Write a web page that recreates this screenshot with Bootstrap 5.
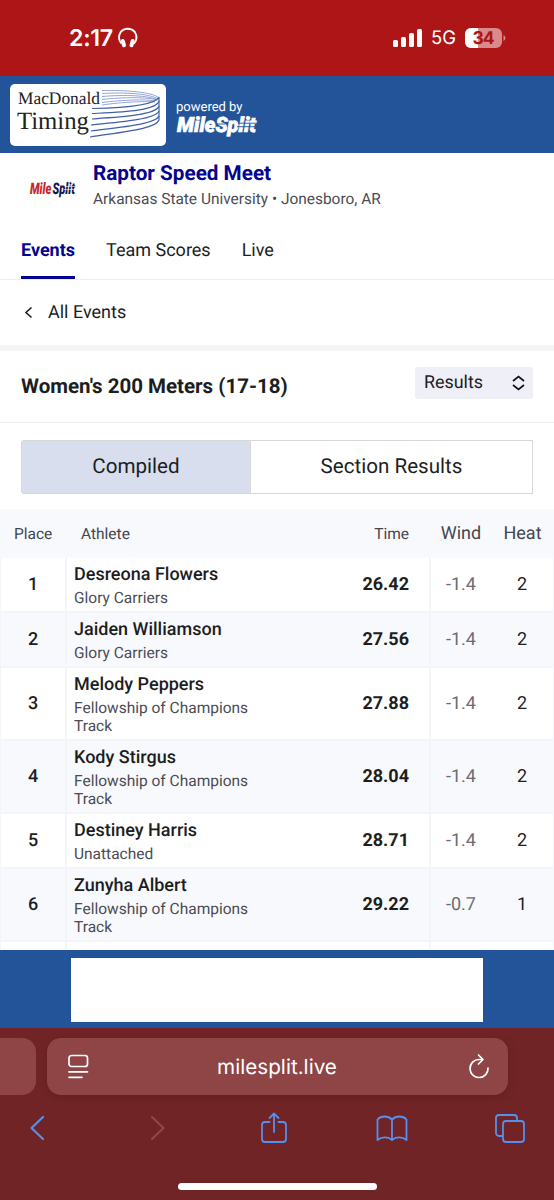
<!DOCTYPE html>
<html lang="en">
<head>
<meta charset="utf-8">
<meta name="viewport" content="width=device-width, initial-scale=1">
<title>Raptor Speed Meet</title>
<link rel="stylesheet" href="https://cdn.jsdelivr.net/npm/bootstrap@5.3.0/dist/css/bootstrap.min.css">
<style>
  body { font-family: Roboto, "Liberation Sans", sans-serif; color: #1c1e22; height: 1200px; line-height: 1.2; text-rendering: geometricPrecision; }
  svg { display: block; flex: none; overflow: visible; }
  .ios { font-family: Inter, "Liberation Sans", sans-serif; }
  .status-bar { height: 76px; background: #ad1517; color: #fff; padding: 0 48px 0 69px; }
  .clock { font-size: 23.2px; font-weight: 600; letter-spacing: -.3px; padding-top: 1px; }
  .brand-bar { height: 77px; background: #23549a; color: #fff; padding: 0 10px; }
  .powered { font-size: 13px; letter-spacing: 0; padding-top: 1px; margin-bottom: -1px; }
  .meet { height: 67px; padding: 0 21px 0 29px; }
  .meet h1 { font-size: 20.7px; line-height: 26px; color: #04048f; }
  .meet p { font-size: 15.45px; line-height: 18px; color: #4b4c54; }
  .tabs { height: 60px; padding: 0 21px; gap: 31px; border-bottom: 1px solid #ececee; font-size: 18px; }
  .tabs a { color: #1c1e22; padding-top: 20px; text-decoration: none; }
  .tabs a.active { color: #04048f; border-bottom: 3px solid #04048f; font-weight: 700; }
  .back { height: 65px; padding: 0 24px; gap: 14px; font-size: 18px; }
  .back svg { margin-bottom: 2px; }
  .event { height: 78px; padding: 0 21px; border-top: 6px solid #f4f4f4; border-bottom: 1px solid #ececee; }
  .event h2 { font-size: 20.5px; padding-top: 1px; }
  .picker { width: 118px; height: 32px; margin-top: -8px; padding: 0 8px 0 9px; border-radius: 3px; background: #eff0f7; font-size: 17.9px; }
  .segments { height: 54px; margin: 17px 21px 15px; font-size: 20.6px; }
  .segments div { border: 1px solid #d6d7da; }
  .segments .on { width: 230px; background: #d9deee; border-radius: 3px 0 0 3px; }
  .results { height: 441px; overflow: hidden; }
  .results table { table-layout: fixed; border-collapse: separate; border-spacing: 0; width: 554px; }
  .results th { height: 49px; background: #f8f9fd; font-weight: 400; font-size: 15.5px; color: #44464e; padding: 2px 14px 0; }
  .results th.wide { font-size: 18px; padding: 0; }
  .results td { height: 55px; border-bottom: 2px solid #f4f5f8; padding: 0; vertical-align: middle; font-size: 18px; }
  .results tr.two td { height: 73px; }
  .results tr.alt td { background: #f8f9fd; }
  .results td:first-child { border-left: 1px solid #f4f5f8; border-right: 2px solid #f4f5f8; font-weight: 500; }
  .results td:last-child { border-right: 1px solid #f4f5f8; }
  .results td:nth-child(2) { padding: 0 0 0 7px; }
  .results td:nth-child(3) { padding-right: 20px; font-weight: 700; border-right: 2px solid #f4f5f8; }
  .results td:nth-child(4) { color: #6a6c70; }
  .who { font-weight: 500; line-height: 24px; padding-top: 1px; }
  .team { font-size: 15.5px; line-height: 18px; color: #4b4c54; padding-top: 2px; width: 200px; }
  .ad { height: 78px; background: #23549a; padding-top: 8px; }
  .ad div { width: 412px; height: 64px; background: #fff; }
  .browser { height: 172px; background: #702426; padding-top: 10px; }
  .address { height: 57px; gap: 11px; }
  .address .prev { width: 36px; background: #8f4446; border-radius: 0 14px 14px 0; }
  .address .url { width: 461px; background: #8f4446; border-radius: 14px; padding: 0 18px 0 21px; color: #fff; font-size: 20.7px; box-shadow: 0 2px 10px rgba(60,0,0,.18); }
  .url span { margin: 2px 3px 0 0; }
  .tools { height: 66px; padding: 0 28px 0 21px; }
  .home-line { width: 199px; height: 7px; border-radius: 4px; background: #fff; margin-top: 22px; }
</style>
</head>
<body class="bg-white overflow-hidden">
<header class="status-bar ios d-flex align-items-center justify-content-between">
  <div class="d-flex align-items-center">
    <span class="clock">2:17</span>
    <svg style="margin-left:5px" width="20" height="22" viewBox="0 0 20 22" fill="none" stroke="#fff"><path d="M3.500 16.500C.5 13.500 .2 8.500 2.600 5.200A9 8.600 0 0 1 16.900 5.200C19.300 8.500 19 13.500 16 16.500" stroke-width="1.900"/><path d="M4.800 14l1.200 4.300M14.700 14l-1.200 4.300" stroke-width="4" stroke-linecap="round"/></svg>
  </div>
  <div class="d-flex align-items-center">
    <svg width="29" height="18" viewBox="0 0 29 18" fill="#fff"><rect y="11" width="5" height="7" rx="1.500"/><rect x="8" y="8" width="5" height="10" rx="1.500"/><rect x="16" y="4" width="5" height="14" rx="1.500"/><rect x="24" width="5" height="18" rx="1.500"/></svg>
    <span style="font-size:18.500px;margin:1px 9px 0">5G</span>
    <svg width="41" height="20" viewBox="0 0 41 20"><clipPath id="bat"><rect width="37" height="20" rx="6"/></clipPath><g clip-path="url(#bat)"><rect width="37" height="20" fill="#da8a8b"/><rect width="13" height="20" fill="#fff"/></g><path d="M38.500 7q2 1 2 3t-2 3z" fill="#da8a8b"/><text x="18.500" y="16.200" text-anchor="middle" font-size="17.500" font-weight="700" fill="#ad1517" textLength="22">34</text></svg>
  </div>
</header>

<div class="brand-bar d-flex align-items-center">
  <svg width="156" height="62" viewBox="0 0 156 62">
    <rect width="156" height="62" rx="5" fill="#fff"/>
    <g fill="#222" font-family="'Liberation Serif', serif"><text x="8" y="19.500" font-size="17.500" textLength="82" lengthAdjust="spacingAndGlyphs">MacDonald</text><text x="7" y="45" font-size="25" textLength="72" lengthAdjust="spacingAndGlyphs">Timing</text></g>
    <g fill="none" stroke="#7890c8" stroke-width=".8"><path d="M92 6.500C115 6 143 8 149 14"/><path d="M92 9.500C115 8 141 10 148 15"/><path d="M92 12.500C115 10.500 139 11.500 148 16"/><path d="M92 15.500C114 13 137 13 147 16"/><path d="M92 18.500C112 16 136 15 145 17"/><path d="M92 21C112 18 136 17 145 18"/></g>
    <g fill="none" stroke="#3f60a8" stroke-width="1.200"><path d="M82 24.500C112 24 145 22 149 13V17C146 27 112 28 82 29.500"/><path d="M149 17V22C146 31 112 33 82 35"/><path d="M149 22V27C146 35 112 38 81 41"/><path d="M149 27V32C146 40 112 43 81 47"/><path d="M149 32V36C146 45 112 48 80 53"/></g>
  </svg>
  <div style="margin:8px 0 0 10px">
    <div class="powered">powered by</div>
    <svg width="84" height="24" viewBox="0 0 84 24"><text x="1" y="17.500" font-family="Roboto, sans-serif" font-size="21" font-weight="900" font-style="italic" fill="#fff" stroke="#fff" stroke-width=".7" textLength="79" lengthAdjust="spacingAndGlyphs">MileSplit</text><path d="M62 9.200h20M41 10h8M61 12.700h20" stroke="#23549a" stroke-width=".9"/></svg>
  </div>
</div>

<section class="meet d-flex">
  <svg style="margin-top:25px" width="48" height="24" viewBox="0 0 48 24"><g font-family="Roboto, sans-serif" font-size="16" font-weight="900" font-style="italic"><text x="1" y="15.500" textLength="21.500" lengthAdjust="spacingAndGlyphs" fill="#c9262c">Mile</text><text x="23.500" y="15.500" textLength="22.500" lengthAdjust="spacingAndGlyphs" fill="#16164f">Split</text></g><path d="M36 8.500h11M35 11.500h11" stroke="#fff" stroke-width=".6"/></svg>
  <div style="margin:8px 0 0 16px">
    <h1 class="fw-bold mb-0">Raptor Speed Meet</h1>
    <p class="mb-0" style="margin-top:3px">Arkansas State University • Jonesboro, AR</p>
  </div>
</section>
<nav class="tabs d-flex"><a class="active" href="#">Events</a><a href="#">Team Scores</a><a href="#">Live</a></nav>
<div class="back d-flex align-items-center">
  <svg width="10" height="14" viewBox="0 0 10 14" fill="none" stroke="#1c1e22" stroke-width="1.600"><path d="M7.500 2.500L2 7.500l5.500 5"/></svg>
  <span>All Events</span>
</div>
<section class="event d-flex align-items-center justify-content-between">
  <h2 class="fw-bold mb-0">Women's 200 Meters (17-18)</h2>
  <div class="picker d-flex align-items-center justify-content-between"><span>Results</span>
    <svg width="13" height="16" viewBox="0 0 13 16" fill="none" stroke="#111" stroke-width="1.700"><path d="M1 6l5.500-4.500L12 6M1 10l5.500 4.500L12 10"/></svg>
  </div>
</section>
<div class="segments d-flex text-center">
  <div class="on d-flex align-items-center justify-content-center">Compiled</div>
  <div class="flex-fill border-start-0 d-flex align-items-center justify-content-center">Section Results</div>
</div>

<section class="results">
<table>
  <colgroup><col style="width:67px"><col style="width:263px"><col style="width:101px"><col style="width:60px"><col style="width:63px"></colgroup>
  <thead><tr><th>Place</th><th>Athlete</th><th class="text-end" style="padding-right:22px">Time</th><th class="wide text-center">Wind</th><th class="wide text-center">Heat</th></tr></thead>
  <tbody>
  <tr><td class="text-center">1</td><td><div class="who">Desreona Flowers</div><div class="team">Glory Carriers</div></td><td class="text-end">26.42</td><td class="text-center">-1.4</td><td class="text-center">2</td></tr>
  <tr class="alt"><td class="text-center">2</td><td><div class="who">Jaiden Williamson</div><div class="team">Glory Carriers</div></td><td class="text-end">27.56</td><td class="text-center">-1.4</td><td class="text-center">2</td></tr>
  <tr class="two"><td class="text-center">3</td><td><div class="who">Melody Peppers</div><div class="team">Fellowship of Champions Track</div></td><td class="text-end">27.88</td><td class="text-center">-1.4</td><td class="text-center">2</td></tr>
  <tr class="alt two"><td class="text-center">4</td><td><div class="who">Kody Stirgus</div><div class="team">Fellowship of Champions Track</div></td><td class="text-end">28.04</td><td class="text-center">-1.4</td><td class="text-center">2</td></tr>
  <tr><td class="text-center">5</td><td><div class="who">Destiney Harris</div><div class="team">Unattached</div></td><td class="text-end">28.71</td><td class="text-center">-1.4</td><td class="text-center">2</td></tr>
  <tr class="alt two"><td class="text-center">6</td><td><div class="who">Zunyha Albert</div><div class="team">Fellowship of Champions Track</div></td><td class="text-end">29.22</td><td class="text-center">-0.7</td><td class="text-center">1</td></tr>
  <tr><td></td><td></td><td></td><td></td><td></td></tr>
  </tbody>
</table>
</section>

<div class="ad"><div class="mx-auto"></div></div>

<footer class="browser ios">
  <div class="address d-flex">
    <div class="prev"></div>
    <div class="url d-flex align-items-center justify-content-between">
      <svg width="21" height="26" viewBox="0 0 21 26" fill="none" stroke="#fff" stroke-width="1.700" stroke-linecap="round"><rect x="1" y="1.500" width="18.500" height="11" rx="2.500"/><path d="M1 17.800h18.500M1 23.300h13"/></svg>
      <span>milesplit.live</span>
      <svg width="22" height="26" viewBox="0 0 22 26" fill="none" stroke="#fff" stroke-width="1.700" stroke-linecap="round" stroke-linejoin="round"><path d="M14.500 5.500H11A9 9 0 1 0 20 14M10.500 1l4.500 4.500-4.500 4.500"/></svg>
    </div>
  </div>
  <div class="tools d-flex align-items-center justify-content-between">
    <svg width="32" height="26" viewBox="0 0 16 26" fill="none" stroke="#5590ee" stroke-width="2.200" stroke-linecap="round" stroke-linejoin="round"><path d="M14 2L2.500 13 14 24"/></svg>
    <svg width="32" height="26" viewBox="-3 0 16 26" fill="none" stroke="#8c4a48" stroke-width="2" stroke-linecap="round" stroke-linejoin="round"><path d="M2 2l11.500 11L2 24"/></svg>
    <svg width="32" height="32" viewBox="0 0 26 32" fill="none" stroke="#5590ee" stroke-width="1.800" stroke-linecap="round" stroke-linejoin="round"><path d="M8.500 10H4a3 3 0 0 0-3 3v14a3 3 0 0 0 3 3h18a3 3 0 0 0 3-3V13a3 3 0 0 0-3-3h-4.500M13 20V1.500M8.500 6L13 1.500 17.500 6"/></svg>
    <svg width="32" height="27" viewBox="0 0 32 27" fill="none" stroke="#5590ee" stroke-width="1.800" stroke-linejoin="round"><path d="M16 4.500C12 .500 5 .500 1.500 4.500V25c4-3.500 11-3.500 14.500 0 3.500-3.500 10.500-3.500 14.500 0V4.500C27 .500 20 .500 16 4.500V25"/></svg>
    <svg width="32" height="29" viewBox="0 0 30 29" fill="none" stroke="#5590ee" stroke-width="1.800"><path d="M8 22H4a3 3 0 0 1-3-3V4a3 3 0 0 1 3-3h15a3 3 0 0 1 3 3v3"/><rect x="8" y="7" width="21" height="21" rx="3"/></svg>
  </div>
  <div class="home-line mx-auto"></div>
</footer>
<script src="https://cdn.jsdelivr.net/npm/bootstrap@5.3.0/dist/js/bootstrap.bundle.min.js"></script>
</body>
</html>
